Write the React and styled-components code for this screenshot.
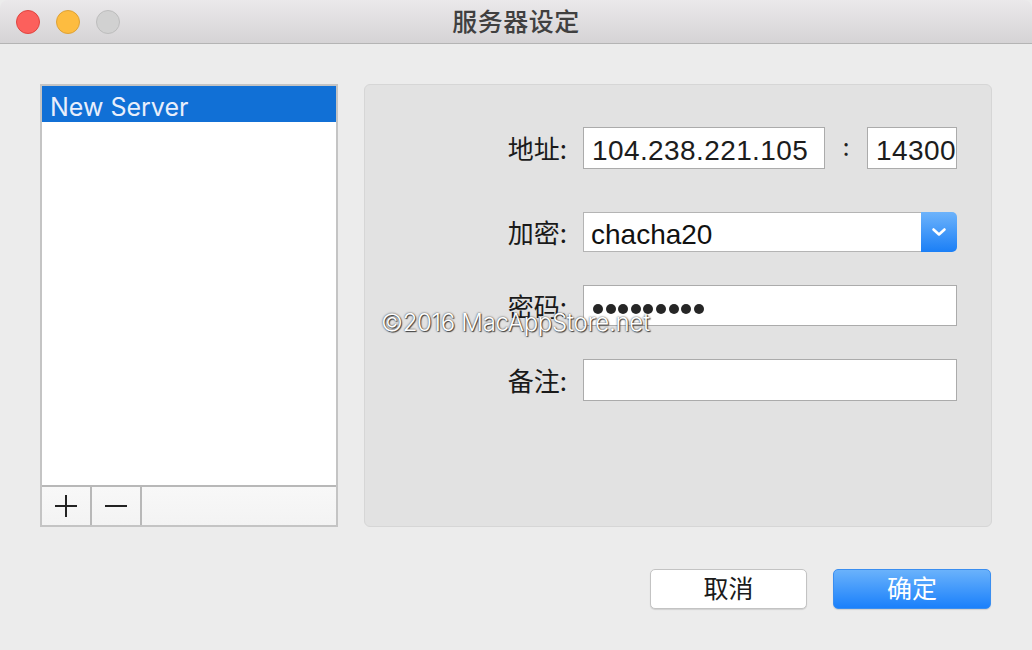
import React from "react";
import styled, { createGlobalStyle } from "styled-components";

const GlobalStyle = createGlobalStyle`
  html, body {
    margin: 0;
    padding: 0;
    background: #ececec;
  }
  body {
    font-family: "Inter", "Noto Sans", "Noto Sans CJK SC", sans-serif;
  }
`;

const Window = styled.div`
  width: 1032px;
  height: 650px;
  display: flex;
  flex-direction: column;
  background: #ececec;
  position: relative;
  overflow: hidden;
`;

const TitleBar = styled.div`
  height: 43px;
  border-bottom: 1px solid #b4b4b4;
  background: linear-gradient(#ebe9eb, #d5d3d5);
  display: grid;
  grid-template-columns: 1fr auto 1fr;
  align-items: center;
  border-radius: 8px 8px 0 0;
`;

const Lights = styled.div`
  display: flex;
  gap: 16px;
  padding-left: 16px;
`;

const Light = styled.span`
  width: 22px;
  height: 22px;
  border-radius: 50%;
  background: ${p => p.$bg};
  border: 1px solid ${p => p.$edge};
`;

const Title = styled.div`
  font-family: "Noto Sans CJK SC", sans-serif;
  font-size: 25px;
  font-weight: 500;
  line-height: 1;
  color: #404040;
  letter-spacing: 0.5px;
  margin-top: -2px;
`;

const Body = styled.div`
  display: flex;
  gap: 26px;
  padding: 40px 40px 0 40px;
`;

const ListBox = styled.div`
  width: 294px;
  height: 439px;
  border: 2px solid #c4c4c4;
  background: #fff;
  display: flex;
  flex-direction: column;
`;

const ListItems = styled.div`
  flex: 1;
`;

const ListRow = styled.div`
  height: 36px;
  display: flex;
  align-items: center;
  padding: 5px 0 0 8px;
  box-sizing: border-box;
  font-family: "Inter", "Noto Sans", sans-serif;
  font-size: 25px;
  color: ${p => (p.$selected ? "#e8eefb" : "#222")};
  background: ${p => (p.$selected ? "#1170d6" : "transparent")};
`;

const ListTools = styled.div`
  height: 38px;
  border-top: 2px solid #b8b8b8;
  background: linear-gradient(#f8f8f8, #f3f3f3);
  display: flex;
`;

const ToolButton = styled.div`
  width: 48px;
  border-right: 2px solid #b8b8b8;
  display: flex;
  align-items: center;
  justify-content: center;
`;

const Panel = styled.div`
  width: 626px;
  height: 441px;
  background: #e2e2e2;
  border: 1px solid #d6d6d6;
  border-radius: 6px;
  position: relative;
`;

const Form = styled.div`
  display: flex;
  flex-direction: column;
  padding-top: 42px;
`;

const Row = styled.div`
  display: flex;
  align-items: center;
  margin-bottom: ${p => p.$mb}px;
`;

const Label = styled.div`
  width: 202px;
  text-align: right;
  font-family: "Noto Sans CJK SC", sans-serif;
  font-size: 26px;
  line-height: 1;
  color: #1a1a1a;
  margin-right: 16px;
`;

const Field = styled.div`
  width: ${p => p.$w}px;
  height: ${p => p.$h || 40}px;
  background: #fff;
  border: 1px solid #ababab;
  display: flex;
  align-items: center;
  padding: 5px 0 0 8px;
  box-sizing: border-box;
  font-family: "Liberation Sans", "Noto Sans", sans-serif;
  font-size: 28px;
  letter-spacing: 0.4px;
  color: #1c1c1c;
  overflow: hidden;
  white-space: nowrap;
`;

const Colon = styled.div`
  width: 42px;
  text-align: center;
  font-size: 24px;
  color: #222;
  font-family: "Noto Sans CJK SC", sans-serif;
  margin-top: -6px;
`;

const Select = styled.div`
  width: 374px;
  height: 40px;
  display: flex;
  box-sizing: border-box;
`;

const SelectValue = styled.div`
  flex: 1;
  background: #fff;
  border: 1px solid #b4b4b4;
  border-right: none;
  display: flex;
  align-items: center;
  padding: 5px 0 0 7px;
  font-family: "Liberation Sans", "Noto Sans", sans-serif;
  font-size: 28px;
  color: #111;
`;

const SelectArrow = styled.div`
  width: 36px;
  border-radius: 0 5px 5px 0;
  background: linear-gradient(#6db3fb, #1b7ff6);
  display: flex;
  align-items: center;
  justify-content: center;
`;

const Dots = styled.div`
  display: flex;
  gap: 2.6px;
  padding-left: 1px;
  margin-top: 1px;
`;

const Dot = styled.span`
  width: 10px;
  height: 10px;
  border-radius: 50%;
  background: #262626;
`;

const Watermark = styled.div`
  position: absolute;
  left: 381px;
  top: 308px;
  font-family: "Inter", "Noto Sans", sans-serif;
  font-size: 24px;
  font-weight: 300;
  color: #fff;
  letter-spacing: -0.3px;
  text-shadow: 0 0 2px #333, 1px 1px 1px #444;
  pointer-events: none;
`;

const Footer = styled.div`
  display: flex;
  justify-content: flex-end;
  gap: 26px;
  padding: 42px 41px 0 0;
`;

const Button = styled.div`
  width: ${p => p.$w}px;
  height: 40px;
  box-sizing: border-box;
  border-radius: 5px;
  display: flex;
  align-items: center;
  justify-content: center;
  padding-bottom: 3px;
  font-family: "Noto Sans CJK SC", sans-serif;
  font-size: 25px;
  line-height: 1;
  color: ${p => (p.$primary ? "#fff" : "#1a1a1a")};
  background: ${p => (p.$primary ? "linear-gradient(#6ab2fb, #1a80fb)" : "#fff")};
  border: 1px solid ${p => (p.$primary ? "#3a8ef0" : "#c3c3c3")};
  box-shadow: 0 1px 1px rgba(0, 0, 0, 0.12);
`;

export default function App() {
  return (
    <>
      <GlobalStyle />
      <Window>
        <TitleBar>
          <Lights>
            <Light $bg="#fc605c" $edge="#e0443f" />
            <Light $bg="#fdbc40" $edge="#dea236" />
            <Light $bg="#d1d1d1" $edge="#bdbdbd" />
          </Lights>
          <Title>服务器设定</Title>
          <div />
        </TitleBar>
        <Body>
          <ListBox>
            <ListItems>
              <ListRow $selected>New Server</ListRow>
            </ListItems>
            <ListTools>
              <ToolButton>
                <svg width="24" height="24" viewBox="0 0 24 24">
                  <path d="M12 1v22M1 12h22" stroke="#222" strokeWidth="2" />
                </svg>
              </ToolButton>
              <ToolButton>
                <svg width="24" height="24" viewBox="0 0 24 24">
                  <path d="M1 12h22" stroke="#222" strokeWidth="2" />
                </svg>
              </ToolButton>
            </ListTools>
          </ListBox>
          <Panel>
            <Form>
              <Row $mb={43}>
                <Label>地址:</Label>
                <Field $w={242} $h={42}>104.238.221.105</Field>
                <Colon>:</Colon>
                <Field $w={90} $h={42}>14300</Field>
              </Row>
              <Row $mb={33}>
                <Label>加密:</Label>
                <Select>
                  <SelectValue>chacha20</SelectValue>
                  <SelectArrow>
                    <svg width="16" height="10" viewBox="0 0 16 10">
                      <path d="M2.5 2.5l5.5 5 5.5-5" stroke="#fff" strokeWidth="2.6" fill="none" strokeLinecap="round" strokeLinejoin="round" />
                    </svg>
                  </SelectArrow>
                </Select>
              </Row>
              <Row $mb={33}>
                <Label>密码:</Label>
                <Field $w={374} $h={41}>
                  <Dots>
                    {Array.from({ length: 9 }).map((_, i) => (
                      <Dot key={i} />
                    ))}
                  </Dots>
                </Field>
              </Row>
              <Row $mb={0}>
                <Label>备注:</Label>
                <Field $w={374} $h={42} />
              </Row>
            </Form>
          </Panel>
        </Body>
        <Footer>
          <Button $w={157}>取消</Button>
          <Button $w={158} $primary>确定</Button>
        </Footer>
        <Watermark>©2016 MacAppStore.net</Watermark>
      </Window>
    </>
  );
}
